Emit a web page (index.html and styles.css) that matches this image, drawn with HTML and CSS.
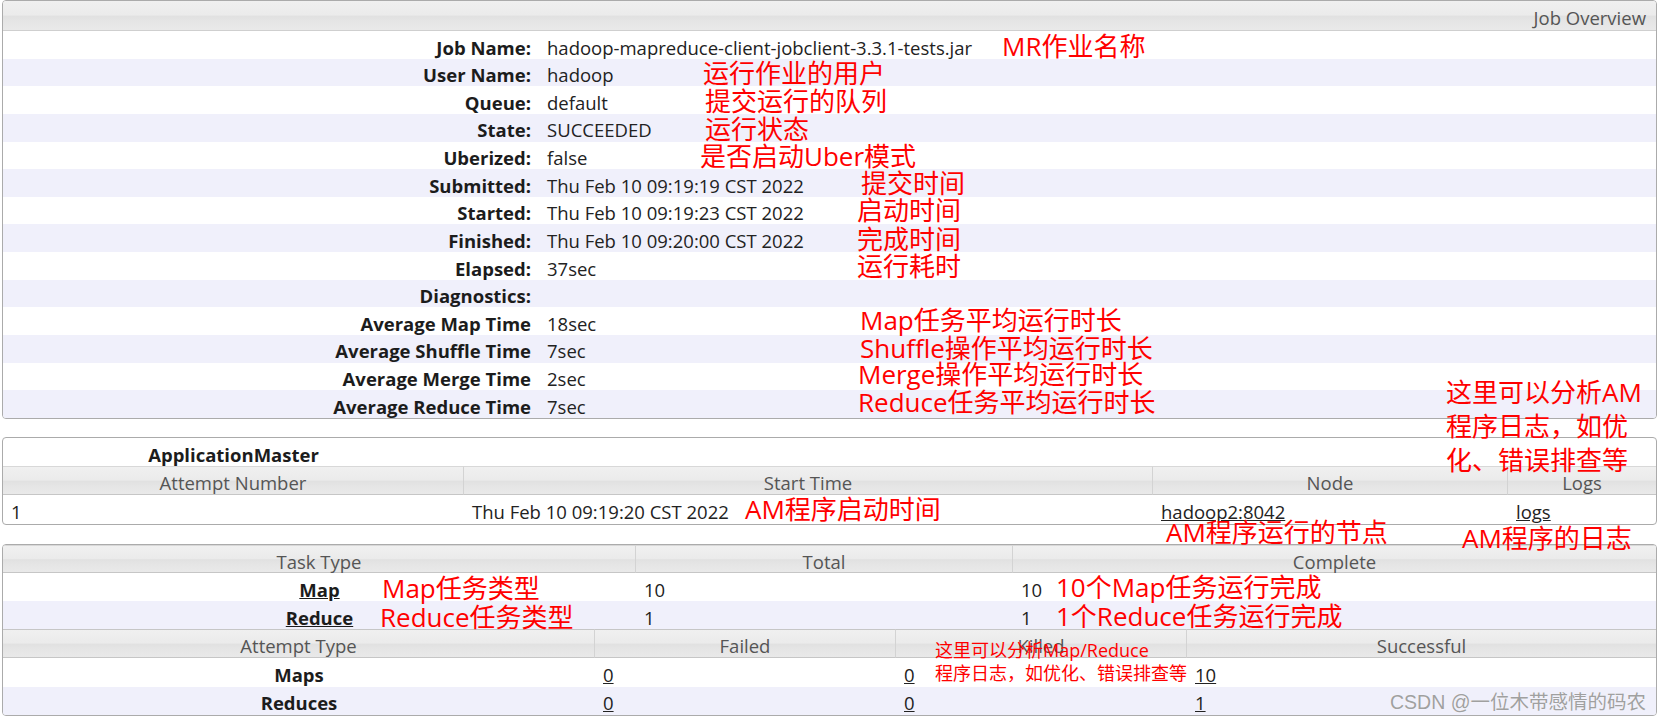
FILE: index.html
```html
<!DOCTYPE html>
<html lang="zh-CN">
<head>
<meta charset="utf-8">
<title>Job Overview</title>
<link rel="stylesheet" href="styles.css">
</head>
<body>
<div class="page">
  <section class="box overview">
    <div class="box-head">Job Overview</div>
    <div class="info">
      <div class="info-row"><div class="k">Job Name:</div><div class="v">hadoop-mapreduce-client-jobclient-3.3.1-tests.jar</div></div>
      <div class="info-row"><div class="k">User Name:</div><div class="v">hadoop</div></div>
      <div class="info-row"><div class="k">Queue:</div><div class="v">default</div></div>
      <div class="info-row"><div class="k">State:</div><div class="v">SUCCEEDED</div></div>
      <div class="info-row"><div class="k">Uberized:</div><div class="v">false</div></div>
      <div class="info-row"><div class="k">Submitted:</div><div class="v">Thu Feb 10 09:19:19 CST 2022</div></div>
      <div class="info-row"><div class="k">Started:</div><div class="v">Thu Feb 10 09:19:23 CST 2022</div></div>
      <div class="info-row"><div class="k">Finished:</div><div class="v">Thu Feb 10 09:20:00 CST 2022</div></div>
      <div class="info-row"><div class="k">Elapsed:</div><div class="v">37sec</div></div>
      <div class="info-row"><div class="k">Diagnostics:</div><div class="v"></div></div>
      <div class="info-row"><div class="k">Average Map Time</div><div class="v">18sec</div></div>
      <div class="info-row"><div class="k">Average Shuffle Time</div><div class="v">7sec</div></div>
      <div class="info-row"><div class="k">Average Merge Time</div><div class="v">2sec</div></div>
      <div class="info-row"><div class="k">Average Reduce Time</div><div class="v">7sec</div></div>
    </div>
  </section>

  <section class="box am">
    <div class="grid am-grid">
      <div class="am-title">ApplicationMaster</div>
      <div class="am-fill"></div>
      <div class="th">Attempt Number</div>
      <div class="th">Start Time</div>
      <div class="th">Node</div>
      <div class="th last">Logs</div>
      <div class="td">1</div>
      <div class="td">Thu Feb 10 09:19:20 CST 2022</div>
      <div class="td"><a href="#">hadoop2:8042</a></div>
      <div class="td"><a href="#">logs</a></div>
    </div>
  </section>

  <section class="box tasks">
    <div class="grid task-grid">
      <div class="th">Task Type</div>
      <div class="th">Total</div>
      <div class="th last">Complete</div>
      <div class="td name"><a href="#">Map</a></div>
      <div class="td">10</div>
      <div class="td">10</div>
      <div class="td name alt"><a href="#">Reduce</a></div>
      <div class="td alt">1</div>
      <div class="td alt">1</div>
    </div>
    <div class="grid attempt-grid">
      <div class="th top">Attempt Type</div>
      <div class="th top">Failed</div>
      <div class="th top">Killed</div>
      <div class="th top last">Successful</div>
      <div class="td name">Maps</div>
      <div class="td"><a href="#">0</a></div>
      <div class="td"><a href="#">0</a></div>
      <div class="td"><a href="#">10</a></div>
      <div class="td name alt">Reduces</div>
      <div class="td alt"><a href="#">0</a></div>
      <div class="td alt"><a href="#">0</a></div>
      <div class="td alt"><a href="#">1</a></div>
    </div>
  </section>

  <div class="note n1">MR作业名称</div>
  <div class="note n2">运行作业的用户</div>
  <div class="note n3">提交运行的队列</div>
  <div class="note n4">运行状态</div>
  <div class="note n5">是否启动Uber模式</div>
  <div class="note n6">提交时间</div>
  <div class="note n7">启动时间</div>
  <div class="note n8">完成时间</div>
  <div class="note n9">运行耗时</div>
  <div class="note n10">Map任务平均运行时长</div>
  <div class="note n11">Shuffle操作平均运行时长</div>
  <div class="note n12">Merge操作平均运行时长</div>
  <div class="note n13">Reduce任务平均运行时长</div>
  <div class="note n14">这里可以分析AM<br>程序日志，如优<br>化、错误排查等</div>
  <div class="note n15">AM程序启动时间</div>
  <div class="note n16">AM程序运行的节点</div>
  <div class="note n17">AM程序的日志</div>
  <div class="note n18">Map任务类型</div>
  <div class="note n19">Reduce任务类型</div>
  <div class="note n20">10个Map任务运行完成</div>
  <div class="note n21">1个Reduce任务运行完成</div>
  <div class="note small n22">这里可以分析Map/Reduce<br>程序日志，如优化、错误排查等</div>
  <div class="watermark">CSDN @一位木带感情的码农</div>
</div>
</body>
</html>
```

FILE: styles.css
```css
* { box-sizing: border-box; }

body {
  margin: 0;
  background: #ffffff;
  font-family: "Open Sans", "Noto Sans", sans-serif;
  font-size: 18.5px;
  color: #222222;
}

a { color: #222222; text-decoration: underline; }

.page {
  position: relative;
  padding: 0 2px;
}

.box {
  border: 1px solid #ababab;
  border-radius: 4px;
  overflow: hidden;
  background: #ffffff;
}

.am { margin-top: 18px; }
.tasks { margin-top: 19px; }

.box-head {
  height: 30px;
  border-bottom: 1px solid #cfcfcf;
  background: linear-gradient(to bottom, #f0f0f0 0%, #ebebeb 48%, #e1e1e1 53%, #e5e5e5 70%, #e9e9e9 100%);
  color: #555555;
  text-align: right;
  padding: 4px 10px 0 0;
  line-height: 25px;
}

.info-row {
  display: grid;
  grid-template-columns: 537px 1fr;
  height: 27.64px;
  padding-top: 3.5px;
  line-height: 25px;
  white-space: nowrap;
}
.info-row:nth-child(even) { background: #f0f0fb; }

.k {
  font-weight: 700;
  color: #1c1c1c;
  text-align: right;
  padding-right: 9px;
}
.v { padding-left: 7px; }

.grid { display: grid; }

.am-grid {
  grid-template-columns: 461px 689px 355px 1fr;
  grid-template-rows: 28.7px 29px 28.3px;
}
.am-title {
  font-weight: 700;
  color: #1c1c1c;
  text-align: center;
  padding-top: 4px;
  line-height: 25px;
}
.am-fill { grid-column: span 3; }

.task-grid {
  grid-template-columns: 633px 377px 1fr;
  grid-template-rows: 28.3px 28.3px 28px;
}
.attempt-grid {
  grid-template-columns: 592px 301px 291px 1fr;
  grid-template-rows: 29px 28.2px 28px;
}

.th {
  background: linear-gradient(to bottom, #f0f0f0 0%, #ebebeb 48%, #e1e1e1 53%, #e5e5e5 70%, #e9e9e9 100%);
  color: #555555;
  text-align: center;
  border-top: 1px solid #d8d8d8;
  border-bottom: 1px solid #c6c6c6;
  border-right: 1px solid #d3d3d3;
  padding-top: 3px;
  line-height: 25px;
  white-space: nowrap;
}
.th.last { border-right: 0; }
.th.top { border-top: 1px solid #c6c6c6; }

.td {
  padding: 3.5px 0 0 8px;
  line-height: 25px;
  white-space: nowrap;
}
.td.name {
  text-align: center;
  padding-left: 0;
  font-weight: 700;
  color: #1c1c1c;
}
.td.name a { color: #1c1c1c; }
.alt { background: #f0f0fb; }

/* annotations drawn over the page */
.note {
  position: absolute;
  color: #ff0000;
  font-family: "Open Sans", "Noto Sans CJK SC", sans-serif;
  font-size: 26px;
  line-height: 26px;
  white-space: nowrap;
}
.note.small { font-size: 18px; line-height: 23px; }

.n1 { left: 1002px; top: 32.5px; }
.n2 { left: 703px; top: 59.5px; }
.n3 { left: 705px; top: 87.5px; }
.n4 { left: 705px; top: 115.5px; }
.n5 { left: 700px; top: 143px; }
.n6 { left: 861px; top: 169.5px; }
.n7 { left: 857px; top: 197px; }
.n8 { left: 857px; top: 225.5px; }
.n9 { left: 857px; top: 253px; }
.n10 { left: 860px; top: 307px; }
.n11 { left: 860px; top: 334.5px; }
.n12 { left: 858px; top: 361px; }
.n13 { left: 858px; top: 388.5px; }
.n14 { left: 1446px; top: 375px; line-height: 34px; }
.n15 { left: 745px; top: 495.5px; }
.n16 { left: 1166px; top: 518.5px; }
.n17 { left: 1462px; top: 525px; }
.n18 { left: 382px; top: 574.5px; }
.n19 { left: 380px; top: 603.5px; }
.n20 { left: 1056px; top: 573.5px; }
.n21 { left: 1056px; top: 602.5px; }
.n22 { left: 935px; top: 638.5px; }

.watermark {
  position: absolute;
  left: 1390px;
  top: 691px;
  font-family: "Liberation Sans", "Noto Sans CJK SC", sans-serif;
  font-size: 19.5px;
  line-height: 22px;
  color: #a0a0a0;
  text-shadow: 0 0 1px #ffffff;
  white-space: nowrap;
}
```
